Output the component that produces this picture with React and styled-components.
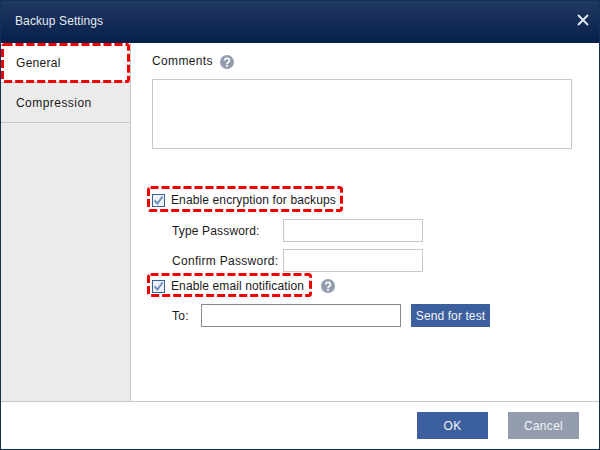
import styled, { createGlobalStyle } from "styled-components";

const Global = createGlobalStyle`
  html, body { margin: 0; padding: 0; background: #fff; }
  body { font-family: "Liberation Sans", Arial, sans-serif; font-size: 12px; color: #1a1a1a; }
`;

const Dialog = styled.div`
  width: 600px;
  height: 450px;
  box-sizing: border-box;
  border: 1px solid #0f3350;
  display: flex;
  flex-direction: column;
  background: #fff;
`;

const TitleBar = styled.div`
  height: 42px;
  flex: none;
  box-sizing: border-box;
  display: flex;
  align-items: center;
  justify-content: space-between;
  padding: 0 10px 2px 14px;
  background: linear-gradient(#203862, #07204b);
  color: #e6e9ef;
  letter-spacing: 0.1px;
`;

const CloseIcon = styled.svg`
  margin-bottom: 3px;
`;

const Body = styled.div`
  flex: 1;
  display: flex;
  min-height: 0;
`;

const Sidebar = styled.div`
  width: 129px;
  flex: none;
  background: #ebebeb;
  border-right: 1px solid #c8c8c8;
`;

const Tab = styled.div`
  position: relative;
  height: 40px;
  box-sizing: border-box;
  padding-left: 15px;
  display: flex;
  align-items: center;
  letter-spacing: ${(p) => p.$spacing}px;
  background: ${(p) => (p.$active ? "#fff" : "transparent")};
  border-bottom: 1px solid #c8c8c8;
`;

const Content = styled.div`
  flex: 1;
  padding: 9px 0 0 21px;
`;

const LabelRow = styled.div`
  display: flex;
  align-items: center;
  gap: 7px;
  height: 18px;
  letter-spacing: 0.35px;
`;

const CommentBox = styled.div`
  width: 418px;
  height: 68px;
  margin-top: 9px;
  border: 1px solid #c8c8c8;
`;

const CheckRow = styled.div`
  position: relative;
  display: flex;
  align-items: center;
  height: 18px;
  letter-spacing: 0.12px;
  margin-top: ${(p) => p.$top}px;
`;

const HighlightFrame = styled.svg`
  position: absolute;
  left: ${(p) => p.$left}px;
  top: ${(p) => p.$top}px;
  pointer-events: none;
`;

const CheckBox = styled.span`
  width: 11px;
  height: 11px;
  flex: none;
  margin-right: 6px;
  border: 1px solid #3b5f9d;
  background: #eef2f8;
  display: flex;
  align-items: center;
  justify-content: center;
`;

const FieldRow = styled.div`
  display: flex;
  align-items: center;
  margin-top: ${(p) => p.$top}px;
  padding-left: 20px;
  letter-spacing: ${(p) => p.$spacing}px;
`;

const FieldLabel = styled.label`
  width: ${(p) => p.$width}px;
  flex: none;
`;

const Input = styled.div`
  width: ${(p) => p.$width}px;
  height: 21px;
  border: 1px solid ${(p) => p.$border};
  background: #fff;
`;

const SmallButton = styled.button`
  margin-left: 10px;
  width: 79px;
  height: 23px;
  border: 0;
  padding: 0;
  background: #3c5f9d;
  color: #f2f4f8;
  font: inherit;
  letter-spacing: 0.1px;
`;

const Footer = styled.div`
  height: 48px;
  flex: none;
  box-sizing: border-box;
  border-top: 1px solid #c8c8c8;
  display: flex;
  justify-content: flex-end;
  gap: 20px;
  padding: 10px 20px 0 0;
`;

const FooterButton = styled.button`
  width: 71px;
  height: 27px;
  border: 0;
  padding: 0;
  background: ${(p) => (p.$muted ? "#939dae" : "#3c5f9d")};
  color: #f2f4f8;
  font: inherit;
  letter-spacing: 0.3px;
`;

const HelpIcon = styled.svg`
  flex: none;
  margin-top: ${(p) => p.$top || 0}px;
  margin-left: ${(p) => p.$left || 0}px;
`;

const Help = ({ top, left }) => (
  <HelpIcon $top={top} $left={left} width="14" height="14" viewBox="0 0 15 15">
    <circle cx="7.5" cy="7.5" r="7.5" fill="#939dae" />
    <path d="M5 5.8a2.5 2.3 0 1 1 3.8 2c-.9.6-1.3.9-1.3 1.9" fill="none" stroke="#fff" strokeWidth="1.8" />
    <rect x="6.5" y="10.5" width="2" height="2" fill="#fff" />
  </HelpIcon>
);

const Tick = () => (
  <svg width="11" height="11" viewBox="0 0 11 11">
    <path d="M1.5 5.5 4.5 8.5 9.5 1.5" fill="none" stroke="#6f8fc2" strokeWidth="2" />
  </svg>
);

const Close = () => (
  <CloseIcon width="12" height="12" viewBox="0 0 12 12">
    <path d="M1 1 11 11M11 1 1 11" stroke="#e4e8ef" strokeWidth="1.8" />
  </CloseIcon>
);

// red dashed annotation drawn over the screenshot
const Highlight = ({ left, top, width, height }) => (
  <HighlightFrame $left={left} $top={top} width={width} height={height}>
    <rect
      x="1.5"
      y="1.5"
      width={width - 3}
      height={height - 3}
      rx="2"
      fill="none"
      stroke="#f00000"
      strokeWidth="3"
      strokeDasharray="8 3"
    />
  </HighlightFrame>
);

export default function App() {
  return (
    <>
      <Global />
      <Dialog>
        <TitleBar>
          <span>Backup Settings</span>
          <Close />
        </TitleBar>
        <Body>
          <Sidebar>
            <Tab $active $spacing={0.3}>
              General
              <Highlight left={0} top={0} width={129} height={40} />
            </Tab>
            <Tab $spacing={0.45}>Compression</Tab>
          </Sidebar>
          <Content>
            <LabelRow>
              Comments <Help top={2} />
            </LabelRow>
            <CommentBox />
            <CheckRow $top={42}>
              <Highlight left={-5} top={-5} width={196} height={26} />
              <CheckBox><Tick /></CheckBox>
              Enable encryption for backups
            </CheckRow>
            <FieldRow $top={10} $spacing={0.15}>
              <FieldLabel $width={111}>Type Password:</FieldLabel>
              <Input $width={138} $border="#c8c8c8" />
            </FieldRow>
            <FieldRow $top={7} $spacing={0.3}>
              <FieldLabel $width={111}>Confirm Password:</FieldLabel>
              <Input $width={138} $border="#c8c8c8" />
            </FieldRow>
            <CheckRow $top={5}>
              <Highlight left={-5} top={-4} width={165} height={24} />
              <CheckBox><Tick /></CheckBox>
              Enable email notification
              <Help left={17} />
            </CheckRow>
            <FieldRow $top={9} $spacing={0.3}>
              <FieldLabel $width={29}>To:</FieldLabel>
              <Input $width={198} $border="#8a8a8a" />
              <SmallButton>Send for test</SmallButton>
            </FieldRow>
          </Content>
        </Body>
        <Footer>
          <FooterButton>OK</FooterButton>
          <FooterButton $muted>Cancel</FooterButton>
        </Footer>
      </Dialog>
    </>
  );
}
